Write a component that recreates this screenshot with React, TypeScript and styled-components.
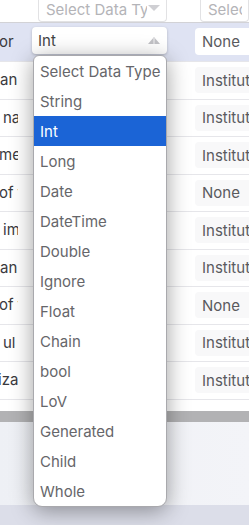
import React from "react";
import styled, { createGlobalStyle } from "styled-components";

const Global = createGlobalStyle`
  html, body { margin: 0; padding: 0; background: #fff; }
  body { width: 249px; height: 525px; overflow: hidden; font-family: Inter, "Noto Sans", sans-serif; }
  * { box-sizing: border-box; }
`;

const Page = styled.div`
  width: 249px;
  height: 525px;
  display: flex;
  flex-direction: column;
  overflow: hidden;
  font-size: 15px;
`;

const HeaderRow = styled.div`
  height: 23px;
  flex: none;
  display: grid;
  grid-template-columns: 18px 164px 1fr;
  align-items: end;
  border-bottom: 1px solid #d2d2d6;
  padding-bottom: 6px;
  overflow: hidden;
`;

const HeaderSelect = styled.div<{ $left: number; $width?: number }>`
  margin-left: ${(p) => p.$left}px;
  width: ${(p) => (p.$width ? `${p.$width}px` : "auto")};
  height: 22px;
  border: 1px solid #e2e2e4;
  border-top: none;
  border-radius: 0 0 4px 4px;
  color: #b4b4b8;
  display: flex;
  align-items: center;
  padding: 0 6px 2px 7px;
  white-space: nowrap;
  overflow: hidden;
  gap: 1px;
`;

const HeaderText = styled.span`
  flex: 1;
  min-width: 0;
  overflow: hidden;
  white-space: nowrap;
`;

const HeaderCaret = styled.span`
  flex: none;
  width: 0;
  height: 0;
  margin-top: -4px;
  border-left: 6px solid transparent;
  border-right: 6px solid transparent;
  border-top: 6px solid #cfcfd3;
`;

const Row = styled.div<{ $active?: boolean; $h: number }>`
  height: ${(p) => p.$h}px;
  flex: none;
  display: grid;
  grid-template-columns: 18px 164px 1fr;
  align-items: ${(p) => (p.$active ? "start" : "center")};
  padding-top: ${(p) => (p.$active ? 4 : 0)}px;
  background: ${(p) => (p.$active ? "#dfe3f3" : "#ffffff")};
  border-bottom: 1px solid #e6e6ea;
`;

const NameCell = styled.div<{ $shift: number; $active?: boolean }>`
  overflow: hidden;
  white-space: nowrap;
  color: #3a3a3e;
  padding-left: ${(p) => Math.max(p.$shift, 0)}px;
  text-indent: ${(p) => Math.min(p.$shift, 0)}px;
  line-height: 26px;
  margin-top: ${(p) => (p.$active ? 2 : 0)}px;
`;

const TypeCell = styled.div`
  position: relative;
  padding-left: 14px;
`;

const TypeSelect = styled.div`
  width: 135px;
  height: 27px;
  background: #fff;
  border-radius: 4px;
  box-shadow: 0 1px 3px rgba(0, 0, 0, 0.22);
  display: flex;
  align-items: center;
  justify-content: space-between;
  padding: 0 7px 0 6px;
  color: #444;
`;

const RefBox = styled.div<{ $active?: boolean }>`
  margin-left: 13px;
  height: ${(p) => (p.$active ? 27 : 26)}px;
  margin-top: ${(p) => (p.$active ? 1 : 0)}px;
  background: ${(p) => (p.$active ? "#ffffff" : "#f8f8f9")};
  border-radius: 4px 0 0 4px;
  display: flex;
  align-items: center;
  padding-left: 7px;
  color: #5a5a5e;
  white-space: nowrap;
  overflow: hidden;
`;

const Menu = styled.ul`
  position: absolute;
  left: 15px;
  top: 28px;
  width: 134px;
  margin: 0;
  padding: 0;
  list-style: none;
  background: #fff;
  border: 1px solid #a9a9ad;
  border-radius: 6px 6px 9px 9px;
  box-shadow: 0 4px 22px rgba(0, 0, 0, 0.38);
  overflow: hidden;
  z-index: 10;
`;

const MenuItem = styled.li<{ $selected?: boolean }>`
  height: 30px;
  display: flex;
  align-items: center;
  padding-left: 6px;
  white-space: nowrap;
  color: ${(p) => (p.$selected ? "#ffffff" : "#66666a")};
  background: ${(p) => (p.$selected ? "#1b64d6" : "transparent")};
`;

const Gap = styled.div`
  height: 11px;
  flex: none;
  background: #fff;
`;

const ScrollBand = styled.div`
  height: 11px;
  flex: none;
  background: #b2b2b4;
`;

const Footer = styled.div`
  height: 83px;
  flex: none;
  background: linear-gradient(90deg, #eef0f5, #f3f4f8);
`;

const BottomBar = styled.div`
  flex: 1;
  background: #dcdee9;
`;

const UpArrows = () => (
  <svg width="12" height="8" viewBox="0 0 12 8">
    <polygon points="0,7 6,0 12,7" fill="#c2c2c6" />
    <rect x="5.6" y="1" width="0.8" height="6" fill="#ffffff" />
  </svg>
);

const OPTIONS = [
  "Select Data Type",
  "String",
  "Int",
  "Long",
  "Date",
  "DateTime",
  "Double",
  "Ignore",
  "Float",
  "Chain",
  "bool",
  "LoV",
  "Generated",
  "Child",
  "Whole",
];

const ROWS: { name: string; shift: number; ref: string; h: number }[] = [
  { name: "for", shift: -6, ref: "None", h: 39 },
  { name: "an", shift: 0, ref: "Institution", h: 37.5 },
  { name: "na", shift: 3, ref: "Institution", h: 37.5 },
  { name: "me", shift: -1, ref: "Institution", h: 37.5 },
  { name: "of t", shift: -1, ref: "None", h: 37.5 },
  { name: "im", shift: 3, ref: "Institution", h: 37.5 },
  { name: "an", shift: 0, ref: "Institution", h: 37.5 },
  { name: "of t", shift: -1, ref: "None", h: 37.5 },
  { name: "ul", shift: 3, ref: "Institution", h: 37.5 },
  { name: "iza", shift: -2, ref: "Institution", h: 37.5 },
];

export default function App() {
  return (
    <>
      <Global />
      <Page>
        <HeaderRow>
          <div />
          <div>
            <HeaderSelect $left={20} $width={129}>
              <HeaderText>Select Data Ty</HeaderText>
              <HeaderCaret />
            </HeaderSelect>
          </div>
          <HeaderSelect $left={18}>
            <HeaderText>Select Reference</HeaderText>
          </HeaderSelect>
        </HeaderRow>
        {ROWS.map((r, i) => (
          <Row key={i} $active={i === 0} $h={r.h}>
            <NameCell $shift={r.shift} $active={i === 0}>
              {r.name}
            </NameCell>
            <TypeCell>
              {i === 0 && (
                <>
                  <TypeSelect>
                    <span>Int</span>
                    <UpArrows />
                  </TypeSelect>
                  <Menu>
                    {OPTIONS.map((o) => (
                      <MenuItem key={o} $selected={o === "Int"}>
                        {o}
                      </MenuItem>
                    ))}
                  </Menu>
                </>
              )}
            </TypeCell>
            <RefBox $active={i === 0}>{r.ref}</RefBox>
          </Row>
        ))}
        <Gap />
        <ScrollBand />
        <Footer />
        <BottomBar />
      </Page>
    </>
  );
}
